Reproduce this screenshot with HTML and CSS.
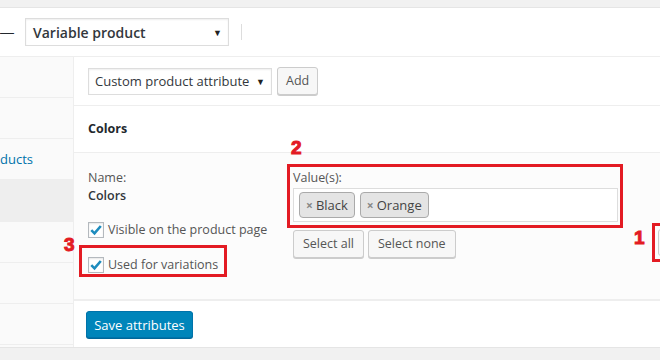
FILE: index.html
```html
<!DOCTYPE html>
<html>
<head>
<meta charset="utf-8">
<link rel="stylesheet" href="styles.css">
</head>
<body>
<div class="panel">
  <div class="head">
    <span class="dash">—</span>
    <div class="select select-type"><span>Variable product</span><span class="arrow">▼</span></div>
    <span class="vsep"></span>
  </div>
  <div class="body">
    <ul class="side">
      <li></li>
      <li></li>
      <li class="linked"><span>ducts</span></li>
      <li class="active"></li>
      <li></li>
      <li></li>
      <li></li>
    </ul>
    <div class="main">
      <div class="toolbar">
        <div class="select select-attr"><span>Custom product attribute</span><span class="arrow">▼</span></div>
        <button class="btn">Add</button>
      </div>
      <div class="attr-head">Colors</div>
      <div class="attr-body">
        <div class="col-left">
          <div class="lbl">Name:</div>
          <div class="name">Colors</div>
          <label class="check first"><span class="box"><svg viewBox="0 0 16 16" width="16" height="16"><path d="M3.3 8.2l3.2 3.2 6.3-7.4" fill="none" stroke="#1e8cbe" stroke-width="2.6"/></svg></span>Visible on the product page</label>
          <label class="check second"><span class="box"><svg viewBox="0 0 16 16" width="16" height="16"><path d="M3.3 8.2l3.2 3.2 6.3-7.4" fill="none" stroke="#1e8cbe" stroke-width="2.6"/></svg></span>Used for variations</label>
        </div>
        <div class="col-right">
          <div class="lbl">Value(s):</div>
          <div class="tags">
            <span class="tag"><span class="x">×</span>Black</span>
            <span class="tag"><span class="x">×</span>Orange</span>
          </div>
          <div class="btns">
            <button class="btn">Select all</button>
            <button class="btn">Select none</button>
          </div>
        </div>
        <div class="edge-btn"></div>
      </div>
      <div class="footer">
        <button class="btn-primary">Save attributes</button>
      </div>
      <div class="mark box2"></div>
      <div class="num n2">2</div>
      <div class="mark box3"></div>
      <div class="num n3">3</div>
      <div class="mark box1"></div>
      <div class="num n1">1</div>
    </div>
  </div>
</div>
</body>
</html>
```
FILE: styles.css
```css
* { box-sizing: border-box; }
html, body { margin: 0; padding: 0; }
body {
  background: #f1f1f1;
  font-family: "Open Sans", "Noto Sans", sans-serif;
  font-size: 12.5px;
  color: #444;
  overflow: hidden;
  width: 660px;
  height: 360px;
}
.panel {
  margin-top: 7px;
  border-top: 1px solid #e5e5e5;
  border-bottom: 1px solid #e5e5e5;
  background: #fff;
  height: 341px;
}
.head {
  height: 49px;
  border-bottom: 1px solid #eee;
  display: flex;
  align-items: center;
}
.dash { font-family: "Liberation Sans", Arial, sans-serif; font-size: 14px; color: #23282d; margin-right: 11px; line-height: 14px; }
.select {
  display: flex;
  align-items: center;
  justify-content: space-between;
  border: 1px solid #ddd;
  background: #fff;
  box-shadow: inset 0 1px 2px rgba(0,0,0,.07);
  color: #32373c;
  height: 28px;
}
.select .arrow { font-size: 9px; color: #222; }
.select-type { width: 204px; padding: 0 6px 0 7px; font-size: 14px; font-weight: 600; color: #32373c; }
.vsep { width: 1px; height: 16px; background: #ddd; margin-left: 12px; }
.body { display: flex; height: 290px; }
.side {
  list-style: none;
  margin: 0;
  padding: 0;
  width: 74px;
  background: #fafafa;
  border-right: 1px solid #eee;
  overflow: hidden;
}
.side li { height: 41px; border-bottom: 1px solid #eee; display: flex; align-items: center; }
.side li.active { background: #eee; height: 42px; }
.side li.linked span { color: #0073aa; font-size: 13px; white-space: nowrap; }
.main { flex: 1; position: relative; }
.toolbar {
  height: 49px;
  border-bottom: 1px solid #eee;
  display: flex;
  align-items: center;
  gap: 5px;
  padding-left: 14px;
}
.select-attr { width: 184px; height: 27px; padding: 0 6px 0 6px; font-size: 13px; color: #32373c; }
.btn {
  font-family: inherit;
  font-size: 12.5px;
  color: #555;
  background: #f7f7f7;
  border: 1px solid #ccc;
  border-radius: 3px;
  box-shadow: 0 1px 0 #ccc;
  height: 28px;
  padding: 0 9px;
  margin: 0;
  line-height: 26px;
}
.toolbar .btn { height: 28px; padding: 0 8px; }
.attr-head {
  height: 47px;
  border-bottom: 1px solid #eee;
  display: flex;
  align-items: center;
  padding-left: 14px;
  padding-bottom: 1px;
  font-weight: 700;
  font-size: 12.5px;
  color: #23282d;
}
.attr-body {
  height: 148px;
  background: #fcfcfc;
  border-bottom: 2px solid #eee;
  display: grid;
  grid-template-columns: 205px 1fr;
  padding: 16px 0 0 14px;
  position: relative;
}
.lbl { line-height: 18px; color: #555; }
.name { line-height: 18px; color: #32373c; font-weight: 600; }
.check { display: flex; align-items: center; gap: 4px; line-height: 16px; color: #555; }
.check.first { margin-top: 17px; }
.check.second { margin-top: 19px; }
.box {
  width: 16px; height: 16px;
  border: 1px solid #b4b9be;
  background: #fff;
  box-shadow: inset 0 1px 2px rgba(0,0,0,.1);
  display: flex;
  align-items: center;
  justify-content: center;
}
.box svg { display: block; margin: -1px; }
.tags {
  margin-top: 1px;
  width: 325px;
  height: 34px;
  border: 1px solid #ddd;
  background: #fff;
  display: flex;
  align-items: center;
  gap: 5px;
  padding-left: 5px;
}
.tag {
  height: 26px;
  display: flex;
  align-items: center;
  background: #e4e4e4;
  border: 1px solid #aaa;
  border-radius: 4px;
  padding: 0 6px 0 6px;
  color: #444;
  font-size: 13px;
}
.tag .x { color: #888; margin-right: 3px; font-weight: 700; font-size: 12px; }
.btns { margin-top: 8px; display: flex; gap: 4px; }
.btns .btn { height: 28px; }
.edge-btn {
  position: absolute;
  left: 584px; top: 76px;
  width: 20px; height: 27px;
  border: 1px solid #ccc;
  border-radius: 3px;
  background: #f7f7f7;
}
.footer { height: 46px; padding: 10px 12px; background: #fff; }
.btn-primary {
  font-family: inherit;
  font-size: 13px;
  color: #fff;
  background: #0085ba;
  border: 1px solid #0073aa;
  border-radius: 3px;
  box-shadow: 0 1px 0 #006799;
  height: 27px;
  width: 107px;
  padding: 0;
  margin: 0;
}
.mark { position: absolute; border: 3px solid #e31b23; }
.box2 { left: 213px; top: 107px; width: 336px; height: 64px; }
.box3 { left: 5px; top: 188px; width: 148px; height: 32px; }
.box1 { left: 578px; top: 166px; width: 40px; height: 39px; border-right: 0; }
.num {
  position: absolute;
  font-family: "Liberation Sans", Arial, sans-serif;
  font-weight: 700;
  font-size: 19px;
  line-height: 19px;
  color: #e31b23;
  -webkit-text-stroke: 1px #e31b23;
}
.n2 { left: 217px; top: 81px; }
.n3 { left: -10px; top: 178px; }
.n1 { left: 560px; top: 171px; }
```
